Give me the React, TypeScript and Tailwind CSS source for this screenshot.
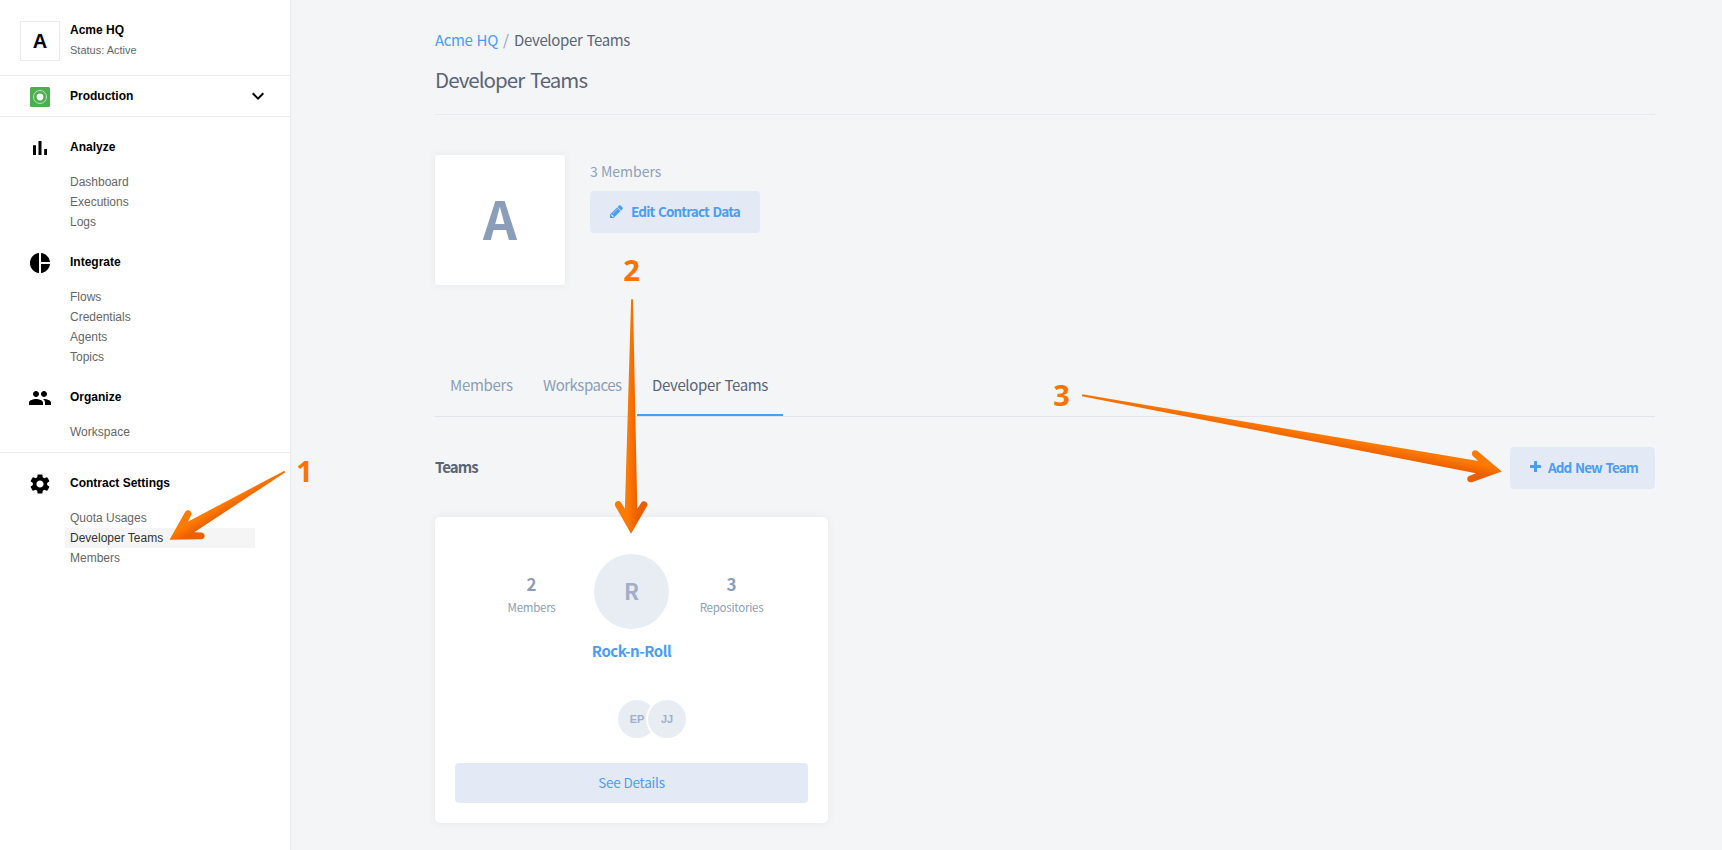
import type { ReactNode } from "react";
import { MdPieChart, MdPeople, MdSettings, MdExpandMore } from "react-icons/md";

function BarsIcon() {
  return (
    <svg className="size-6" viewBox="0 0 24 24" fill="currentColor">
      <path d="M5 9.3h3V19H5zM10.5 5h3v14h-3zM16.2 13h2.8v6h-2.8z" />
    </svg>
  );
}

function PencilIcon() {
  return (
    <svg className="size-[13px]" viewBox="0 0 1536 1536" fill="currentColor">
      <path d="M363 1408l91-91-235-235-91 91v107h128v128zM886 480q0-22-22-22-10 0-17 7l-542 542q-7 7-7 17 0 22 22 22 10 0 17-7l542-542q7-7 7-17zM832 288l416 416-832 832H0v-416zM1515 384q0 53-37 90l-166 166-416-416 166-165q36-38 90-38 53 0 91 38l235 234q37 39 37 91z" />
    </svg>
  );
}

function PlusIcon() {
  return (
    <svg className="size-[11px] -translate-y-px" viewBox="0 0 11 11" fill="currentColor">
      <path d="M4.600 0h1.8q.6 0 .6.6V4h3.4q.6 0 .6.6v1.8q0 .6-.6.6H7v3.4q0 .6-.6.6H4.600q-.6 0-.6-.6V7H.6Q0 7 0 6.400V4.600Q0 4 .6 4H4V.6Q4 0 4.600 0z" />
    </svg>
  );
}

const groups = [
  { title: "Analyze", icon: <BarsIcon />, items: ["Dashboard", "Executions", "Logs"] },
  { title: "Integrate", icon: <MdPieChart size={24} />, items: ["Flows", "Credentials", "Agents", "Topics"] },
  { title: "Organize", icon: <MdPeople size={24} />, items: ["Workspace"] },
];

function NavGroup({ title, icon, items, active }: { title: string; icon: ReactNode; items: string[]; active?: string }) {
  return (
    <section>
      <div className="flex h-6 items-center">
        <span className="ml-7 flex w-6 translate-y-px justify-center">{icon}</span>
        <h2 className="ml-[18px] text-[12px] font-bold">{title}</h2>
      </div>
      <ul className="mt-[13px] ml-[65px] w-[190px] text-[12px] text-[#666]">
        {items.map((item) => (
          <li
            key={item}
            className={item === active ? "h-5 bg-[#f5f5f5] pl-[5px] leading-5 text-[#333]" : "h-5 pl-[5px] leading-5"}
          >
            {item}
          </li>
        ))}
      </ul>
    </section>
  );
}

function Sidebar() {
  return (
    <aside className="w-[290px] shrink-0 bg-white font-['Liberation_Sans',Arial,sans-serif] text-black shadow-[1px_0_1px_#ebecee]">
      <div className="flex h-[76px] border-b border-[#ebebeb] pt-[21px] pl-5">
        <div className="flex size-10 items-center justify-center border border-[#ebebeb] text-[20px] font-bold">A</div>
        <div className="ml-2.5">
          <p className="mt-px text-[12px] leading-4 font-bold">Acme HQ</p>
          <p className="mt-1 text-[11px] leading-4 text-[#666]">Status: Active</p>
        </div>
      </div>
      <div className="flex h-[41px] items-center border-b border-[#ebebeb] pr-[20px] pl-[30px]">
        <svg className="size-5 translate-y-px" viewBox="0 0 20 20" fill="none">
          <rect width="20" height="20" rx="1.5" fill="#4caf50" />
          <circle cx="10" cy="10" r="6.5" stroke="#c5e5c7" strokeWidth="0.9" />
          <circle cx="10" cy="10" r="3.4" fill="#fff" />
        </svg>
        <span className="ml-5 text-[12px] font-bold">Production</span>
        <MdExpandMore className="ml-auto" size={24} />
      </div>
      <nav className="flex flex-col gap-[18px] border-b border-[#ebebeb] pt-[18px] pb-[10px]">
        {groups.map((g) => (
          <NavGroup key={g.title} {...g} />
        ))}
      </nav>
      <nav className="pt-[18px]">
        <NavGroup
          title="Contract Settings"
          icon={<MdSettings size={24} />}
          items={["Quota Usages", "Developer Teams", "Members"]}
          active="Developer Teams"
        />
      </nav>
    </aside>
  );
}

function Stat({ value, label }: { value: string; label: string }) {
  return (
    <div className="w-[125px] pt-5 text-center text-[#8b9eb9]">
      <p className="text-[17px] leading-5 font-bold">{value}</p>
      <p className="mt-[3px] text-[11.5px] leading-5 tracking-[-0.25px]">{label}</p>
    </div>
  );
}

function TeamCard() {
  return (
    <article className="mt-7 flex h-[306px] w-[393px] flex-col items-center rounded-[5px] bg-white px-5 pt-[37px] pb-5 shadow-[0_0_10px_rgba(0,0,0,0.06)]">
      <div className="flex">
        <Stat value="2" label="Members" />
        <div className="flex size-[75px] items-center justify-center rounded-full bg-[#e8edf4] pb-0.5 text-[22px] font-bold text-[#a0b0c7]">
          R
        </div>
        <Stat value="3" label="Repositories" />
      </div>
      <a className="mt-[10px] text-[15px] leading-6 font-bold tracking-[-0.5px] text-[#4a9df5]">Rock-n-Roll</a>
      <div className="mt-[35px] flex pl-[41px] font-['Liberation_Sans',Arial,sans-serif] text-[11px] font-bold text-[#a0b0c7]">
        <span className="flex size-[42px] items-center justify-center rounded-full border-2 border-white bg-[#e8edf4]">EP</span>
        <span className="-ml-3 flex size-[42px] items-center justify-center rounded-full border-2 border-white bg-[#e8edf4]">JJ</span>
      </div>
      <button className="mt-auto h-10 w-full rounded-[4px] bg-[#e3eaf5] pb-px text-[13.5px] tracking-[-0.2px] word-spacing-[1px] text-[#4a9df5]">
        See Details
      </button>
    </article>
  );
}

function Arrow({ id, x, y, angle, length, mirror = false }: { id: string; x: number; y: number; angle: number; length: number; mirror?: boolean }) {
  return (
    <g transform={`translate(${x} ${y}) rotate(${angle}) scale(${mirror ? -1 : 1} 1)`}>
      <linearGradient id={id} gradientUnits="userSpaceOnUse" x1="-6" y1="0" x2="6" y2="0">
        <stop offset="0.2" stopColor="#ff7a00" />
        <stop offset="1" stopColor="#ea6000" />
      </linearGradient>
      <path
        d={`M0 0L-15.8 -27.5C-17.8 -31.5 -12.8 -34.5 -10.2 -31.2L-6.2 -25L-0.9 ${-length}H0.9L6.2 -25L10.2 -31.2C12.8 -34.5 17.8 -31.5 15.8 -27.5Z`}
        fill={`url(#${id})`}
      />
    </g>
  );
}

function Callouts() {
  return (
    <svg className="pointer-events-none absolute inset-0" width="1722" height="850" viewBox="0 0 1722 850">
      <Arrow id="a1" x={169.5} y={539.7} angle={59.4} length={134} />
      <Arrow id="a2" x={631} y={533.7} angle={0.25} length={234.5} />
      <Arrow id="a3" x={1501.7} y={471.5} angle={-79.7} length={426.5} mirror />
      <g className="font-['Open_Sans',sans-serif] text-[29px] font-bold" fill="#ff7200" textAnchor="middle">
        <text x="304.5" y="482">1</text>
        <text x="631.5" y="281">2</text>
        <text x="1061.5" y="405.5">3</text>
      </g>
    </svg>
  );
}

export default function App() {
  return (
    <div className="relative flex h-[850px] w-[1722px] overflow-hidden bg-[#f3f5f7]">
      <Sidebar />
      <main className="ml-[145px] w-[1220px] font-['Noto_Sans_CJK_SC','Noto_Sans',sans-serif] text-[15px] text-[#5a6478]">
        <div className="mt-[28px] flex h-6 items-center tracking-[-0.35px] [word-spacing:1px]">
          <a className="w-[68px] text-[#4a9df5]">Acme HQ</a>
          <span className="w-[11px] text-[#8b9eb9]">/</span>
          <span>Developer Teams</span>
        </div>
        <h1 className="mt-[12px] text-[20.5px] leading-[30px] tracking-[-0.95px] [word-spacing:2px]">Developer Teams</h1>
        <hr className="mt-[20px] border-[#e8eaed]" />
        <div className="mt-10 flex">
          <div className="flex size-[130px] items-center justify-center rounded-[4px] bg-white pb-[5px] text-[53px] font-bold text-[#8b9eb9] shadow-[0_0_10px_rgba(0,0,0,0.06)]">
            A
          </div>
          <div className="ml-[25px] pt-[4px]">
            <p className="text-[14px] leading-6 text-[#8ea0ba]">3 Members</p>
            <button className="mt-[8px] flex h-[42px] w-[170px] items-center rounded-[4px] bg-[#e3eaf5] pb-px pl-5 text-[13.5px] font-bold tracking-[-0.85px] [word-spacing:1.5px] text-[#4a9df5]">
              <PencilIcon />
              <span className="ml-2">Edit Contract Data</span>
            </button>
          </div>
        </div>
        <div className="mt-[71px] flex h-[61px] border-b border-[#e1e4e8] leading-6 text-[#8b9eb9]">
          <span className="h-[60px] w-[93px] pt-[17px] pl-[15px] tracking-[-0.3px]">Members</span>
          <span className="h-[60px] w-[109px] pt-[17px] pl-[15px] tracking-[-0.5px]">Workspaces</span>
          <span className="h-[60px] w-[146px] border-b-2 border-[#4a9df5] pt-[17px] pl-[15px] tracking-[-0.35px] [word-spacing:1px] text-[#5a6478]">
            Developer Teams
          </span>
        </div>
        <div className="mt-[30px] flex h-[42px] items-center justify-between">
          <h2 className="pb-0.5 text-[15px] font-bold tracking-[-0.9px]">Teams</h2>
          <button className="flex h-[42px] w-[145px] items-center rounded-[4px] bg-[#e3eaf5] pb-px pl-5 text-[13.5px] font-bold tracking-[-0.9px] [word-spacing:1.5px] text-[#4a9df5]">
            <PlusIcon />
            <span className="ml-[7px]">Add New Team</span>
          </button>
        </div>
        <TeamCard />
      </main>
      <Callouts />
    </div>
  );
}
